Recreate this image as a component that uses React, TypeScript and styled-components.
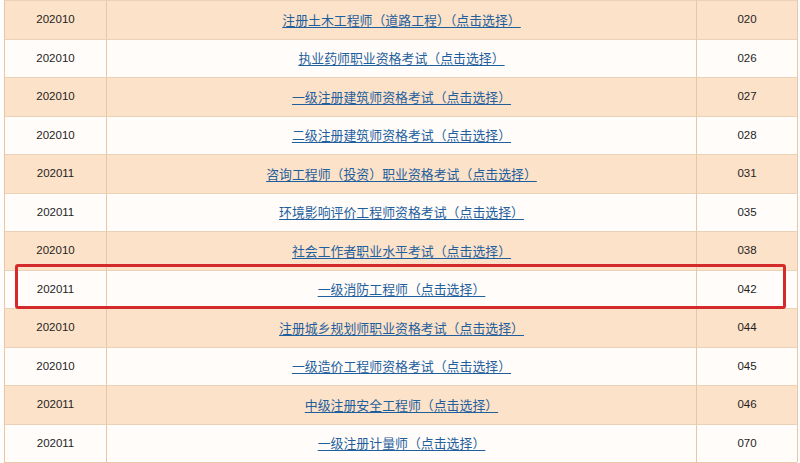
import React from "react";
import styled, { createGlobalStyle } from "styled-components";

const Global = createGlobalStyle`
  html, body { margin: 0; padding: 0; background: #ffffff; }
  body { width: 800px; height: 463px; overflow: hidden; }
`;

const Page = styled.div`
  position: relative;
  width: 800px;
  height: 463px;
  padding: 0 3px 0 4px;
  box-sizing: border-box;
  background: #fffdfb;
`;

const Table = styled.div`
  display: grid;
  grid-template-columns: 102px 590px 101px;
  grid-auto-rows: 38.5px;
  border-left: 1px solid #e6c8a8;
  border-bottom: 1px solid #e6c8a8;
`;

const Cell = styled.div<{ $alt: boolean }>`
  display: flex;
  align-items: center;
  justify-content: center;
  padding-bottom: 1px;
  background: ${(p) => (p.$alt ? "#fce2c8" : "#fffcf9")};
  border-right: 1px solid #e6c8a8;
  border-top: 1px solid #ead2b8;
  box-sizing: border-box;
  font-family: "Liberation Sans", Arial, sans-serif;
  font-size: 11.5px;
  color: #1e1e1e;
`;

const Link = styled.a`
  font-family: "Noto Sans CJK SC", "Liberation Sans", sans-serif;
  font-size: 12.9px;
  color: #1f5f9e;
  text-decoration: underline;
  text-underline-offset: 2px;
  text-decoration-thickness: 1px;
  cursor: pointer;
`;

const Highlight = styled.div`
  position: absolute;
  left: 15px;
  top: 264px;
  width: 771px;
  height: 45px;
  box-sizing: border-box;
  border: 3px solid #d42a2c;
  border-radius: 3px;
  pointer-events: none;
`;

const rows: [string, string, string][] = [
  ["202010", "注册土木工程师（道路工程）（点击选择）", "020"],
  ["202010", "执业药师职业资格考试（点击选择）", "026"],
  ["202010", "一级注册建筑师资格考试（点击选择）", "027"],
  ["202010", "二级注册建筑师资格考试（点击选择）", "028"],
  ["202011", "咨询工程师（投资）职业资格考试（点击选择）", "031"],
  ["202011", "环境影响评价工程师资格考试（点击选择）", "035"],
  ["202010", "社会工作者职业水平考试（点击选择）", "038"],
  ["202011", "一级消防工程师（点击选择）", "042"],
  ["202010", "注册城乡规划师职业资格考试（点击选择）", "044"],
  ["202010", "一级造价工程师资格考试（点击选择）", "045"],
  ["202011", "中级注册安全工程师（点击选择）", "046"],
  ["202011", "一级注册计量师（点击选择）", "070"],
];

export default function App() {
  return (
    <>
      <Global />
      <Page>
        <Table>
          {rows.map(([a, b, c], i) => {
            const alt = i % 2 === 0;
            return (
              <React.Fragment key={i}>
                <Cell $alt={alt}>{a}</Cell>
                <Cell $alt={alt}>
                  <Link>{b}</Link>
                </Cell>
                <Cell $alt={alt}>{c}</Cell>
              </React.Fragment>
            );
          })}
        </Table>
        <Highlight />
      </Page>
    </>
  );
}
